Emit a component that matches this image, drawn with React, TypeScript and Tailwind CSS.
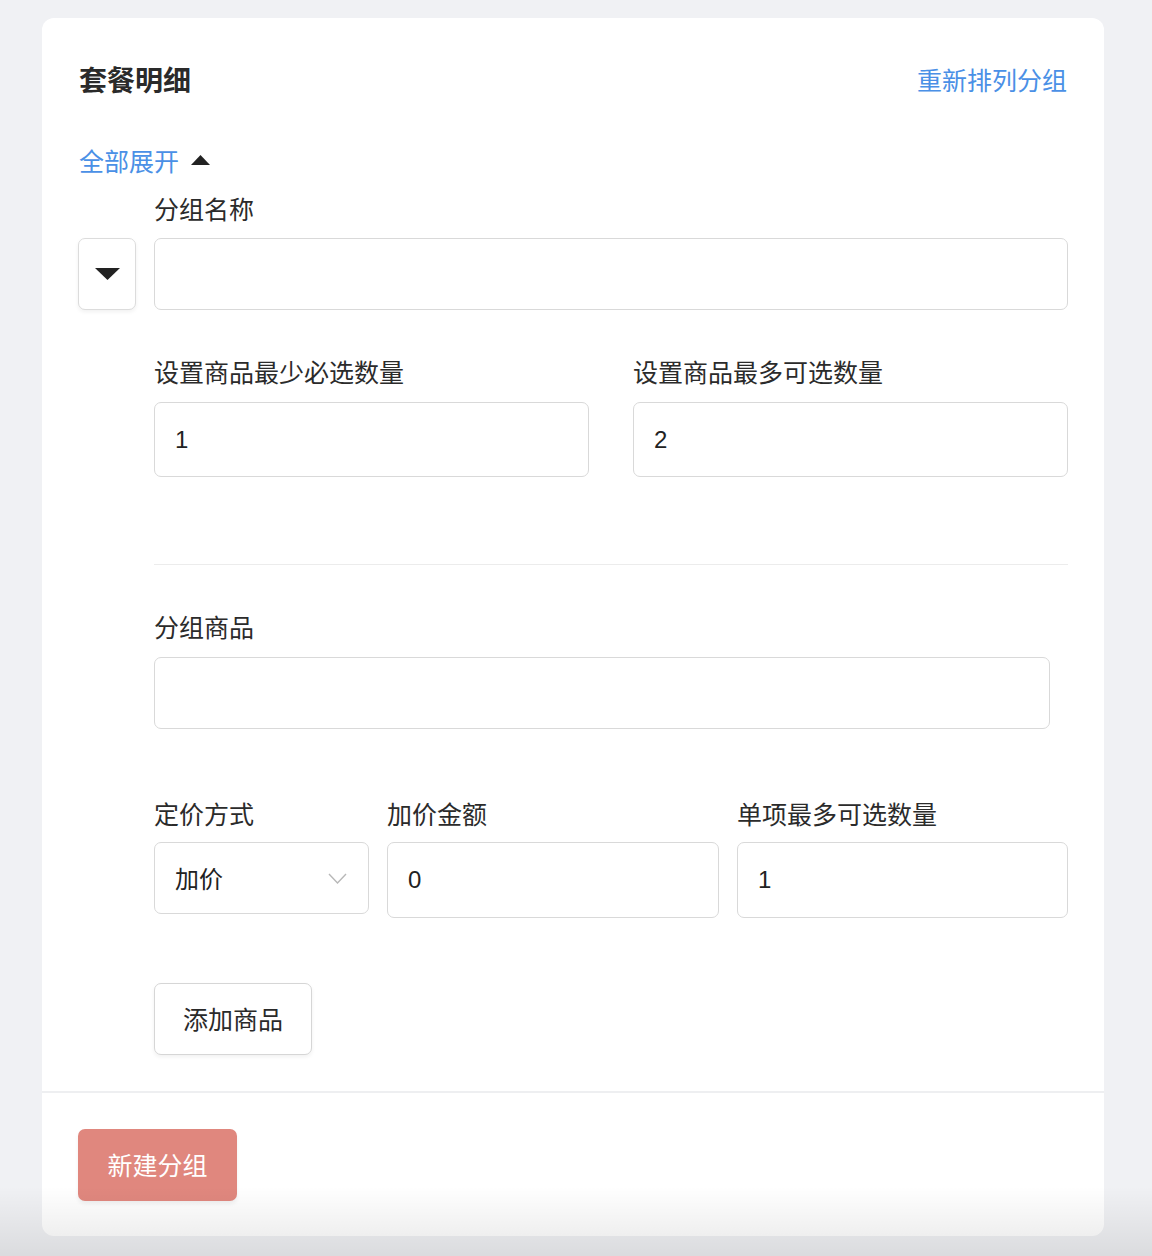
const font = "font-['Noto_Sans_CJK_SC','Liberation_Sans',sans-serif]";

function Label({ children }: { children: React.ReactNode }) {
  return <div className="text-[25px] leading-[30px] text-[#2b2b2b]">{children}</div>;
}

function Field({ value, className = '' }: { value?: string; className?: string }) {
  return (
    <div
      className={`flex items-center rounded-[7px] border border-[#d9d9d9] bg-white px-5 text-[24px] text-[#222] font-['Liberation_Sans','Noto_Sans_CJK_SC',sans-serif] ${className}`}
    >
      {value}
    </div>
  );
}

export default function App() {
  return (
    <div className={`relative min-h-[1256px] bg-[#f0f1f4] ${font}`}>
      <div className="pl-[42px] pr-[48px] pt-[18px]">
        <div className="relative overflow-hidden rounded-[12px] bg-white">
          {/* header */}
          <div className="flex items-center justify-between px-[37px] pt-[41px]">
            <h1 className="text-[28px] font-bold leading-[40px] text-[#2a2a2a]">套餐明细</h1>
            <button className="text-[25px] leading-[40px] text-[#4a90e6]">重新排列分组</button>
          </div>

          <div className="mt-[41px] flex items-center gap-[12px] px-[37px]">
            <span className="text-[25px] leading-[40px] text-[#4a90e6]">全部展开</span>
            <svg width="19" height="10" viewBox="0 0 19 10">
              <path d="M0 10 L9.5 0 L19 10 Z" fill="#222" />
            </svg>
          </div>

          {/* group */}
          <div className="flex gap-[18px] px-[36px] pb-[36px]">
            <div className="pt-[58px]">
              <button className="flex h-[72px] w-[58px] items-center justify-center rounded-[7px] border border-[#dcdcdc] bg-white shadow-[0_2px_4px_rgba(0,0,0,0.06)]">
                <svg width="25" height="12" viewBox="0 0 25 12">
                  <path d="M0 0 L25 0 L12.5 12 Z" fill="#222" />
                </svg>
              </button>
            </div>

            <div className="flex-1">
              <div className="mt-[13px]">
                <Label>分组名称</Label>
              </div>
              <Field className="mt-[15px] h-[72px]" />

              <div className="mt-[46px] grid grid-cols-2 gap-[44px]">
                <div>
                  <Label>设置商品最少必选数量</Label>
                  <Field value="1" className="mt-[16px] h-[75px]" />
                </div>
                <div>
                  <Label>设置商品最多可选数量</Label>
                  <Field value="2" className="mt-[16px] h-[75px]" />
                </div>
              </div>

              <div className="mt-[87px] border-t border-[#ececec]" />

              <div className="mt-[46px]">
                <Label>分组商品</Label>
              </div>
              <Field className="mr-[18px] mt-[16px] h-[72px]" />

              <div className="mt-[69px] flex gap-[18px]">
                <div className="w-[215px]">
                  <Label>定价方式</Label>
                  <div className="mt-[14px] flex h-[72px] items-center justify-between rounded-[7px] border border-[#d9d9d9] pl-5 pr-[21px] text-[24px] text-[#222]">
                    <span>加价</span>
                    <svg width="19" height="11" viewBox="0 0 19 11">
                      <path d="M1 1 L9.5 10 L18 1" fill="none" stroke="#b8b8b8" strokeWidth="1.4" />
                    </svg>
                  </div>
                </div>
                <div className="w-[332px]">
                  <Label>加价金额</Label>
                  <Field value="0" className="mt-[14px] h-[76px]" />
                </div>
                <div className="flex-1">
                  <Label>单项最多可选数量</Label>
                  <Field value="1" className="mt-[14px] h-[76px]" />
                </div>
              </div>

              <button className="mt-[65px] flex h-[72px] w-[158px] items-center justify-center rounded-[7px] border border-[#d6d6d6] bg-white text-[25px] text-[#2a2a2a] shadow-[0_2px_4px_rgba(0,0,0,0.06)]">
                添加商品
              </button>
            </div>
          </div>

          <div className="border-t-2 border-[#eeeff1]" />

          {/* footer */}
          <div className="px-[36px] pb-[35px] pt-[36px]">
            <button className="flex h-[72px] w-[159px] items-center justify-center rounded-[7px] bg-[#e0877e] text-[25px] text-white shadow-[0_3px_4px_rgba(0,0,0,0.06)]">
              新建分组
            </button>
          </div>
        </div>
      </div>
      <div className="pointer-events-none absolute inset-x-0 bottom-0 h-[70px] bg-gradient-to-b from-transparent to-black/[0.09]" />
    </div>
  );
}
